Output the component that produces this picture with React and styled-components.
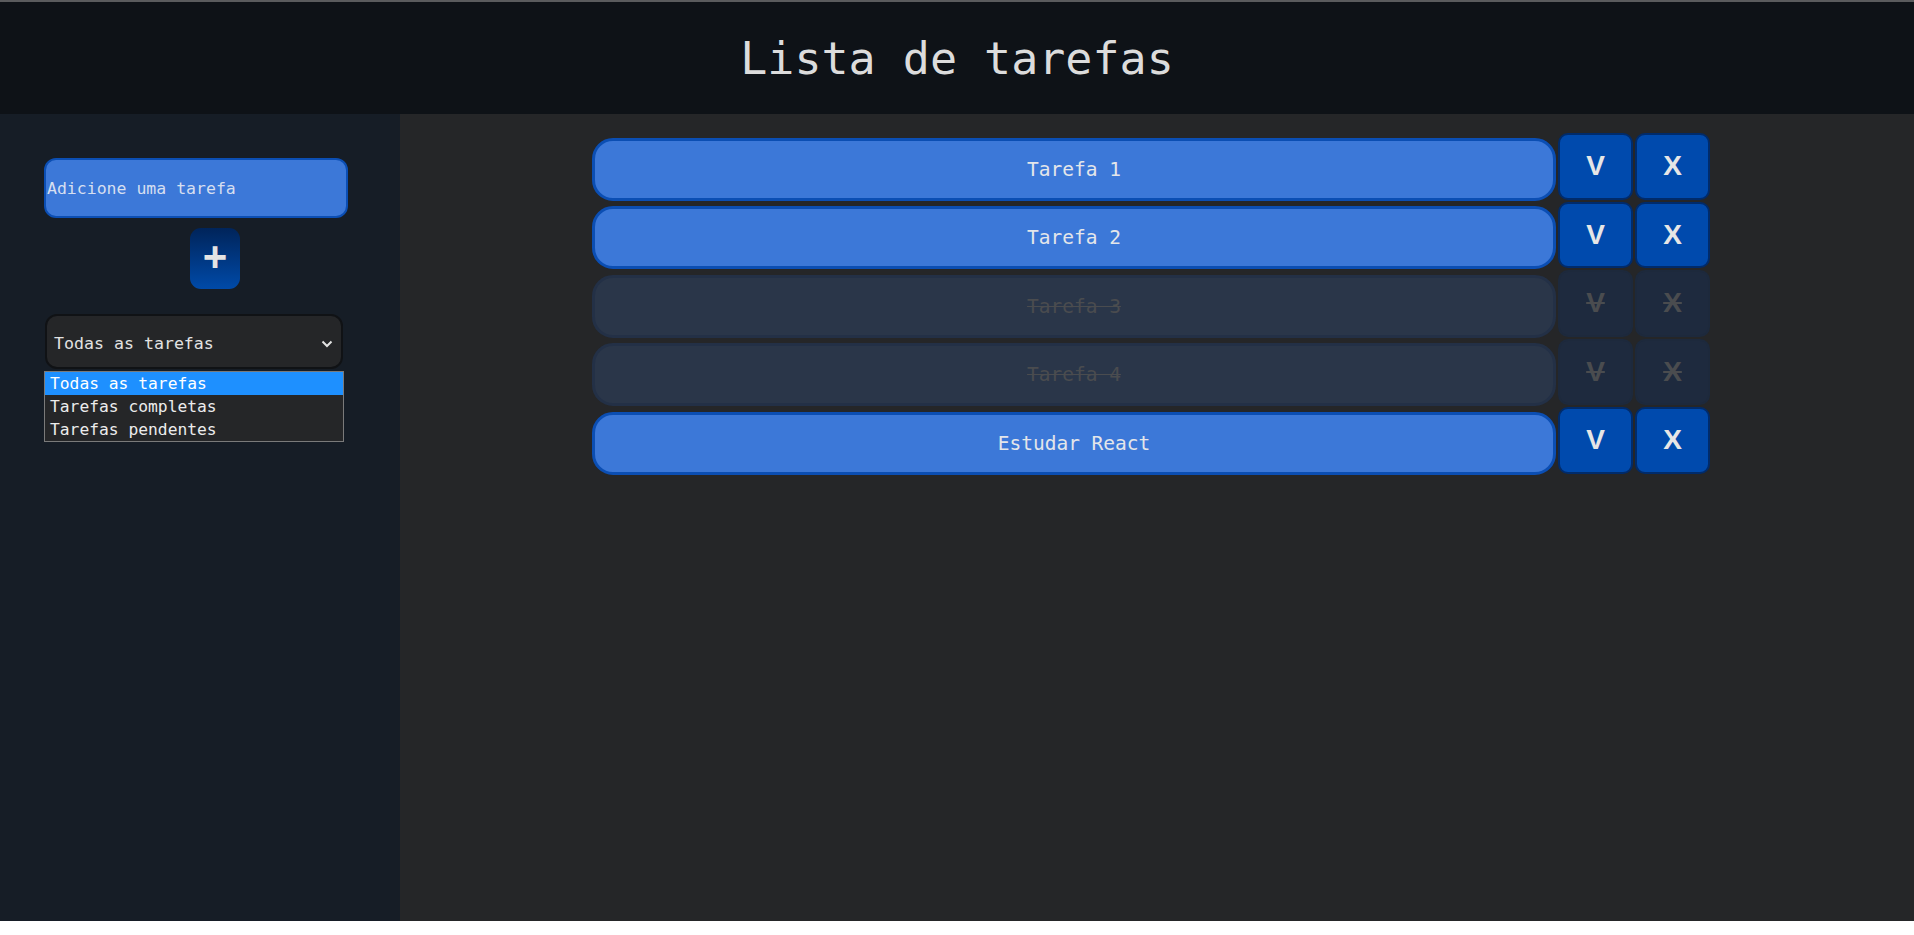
import React from 'react';
import styled, {createGlobalStyle} from 'styled-components';

const mono = '"DejaVu Sans Mono", "Liberation Mono", monospace';

const GlobalStyle = createGlobalStyle`
  body {
    margin: 0;
    background: #ffffff;
    font-family: ${mono};
  }
`;

const Page = styled.div`
  border-top: 2px solid #5a5b5d;
`;

const Header = styled.header`
  height: 112px;
  display: flex;
  align-items: center;
  justify-content: center;
  background: #0e1217;
`;

const Title = styled.h1`
  margin: 0;
  font-family: ${mono};
  font-weight: normal;
  font-size: 45px;
  color: #dcdcdc;
`;

const Layout = styled.div`
  display: grid;
  grid-template-columns: 400px 1fr;
  height: 807px;
`;

const Sidebar = styled.aside`
  background: #161d26;
  padding: 44px 0 0 44px;
  display: flex;
  flex-direction: column;
  align-items: flex-start;
`;

const TaskInput = styled.div`
  box-sizing: border-box;
  width: 304px;
  height: 60px;
  display: flex;
  align-items: center;
  padding-left: 1px;
  background: #3c78d8;
  border: 2px solid #0b4eb3;
  border-radius: 12px;
  color: #d6dff0;
  font-size: 16.5px;
`;

const PlusButton = styled.button`
  box-sizing: border-box;
  width: 50px;
  height: 61px;
  margin: 10px 0 0 146px;
  border: none;
  border-radius: 11px;
  background: linear-gradient(to bottom, #00245a, #004aa8);
  color: #e4e4e4;
  font-family: "Liberation Sans", Arial, sans-serif;
  font-weight: bold;
  font-size: 42px;
  line-height: 1;
  padding: 0 0 4px;
`;

const SelectWrap = styled.div`
  position: relative;
  margin: 25px 0 0 1px;
`;

const SelectBox = styled.div`
  box-sizing: border-box;
  width: 298px;
  height: 55px;
  display: flex;
  align-items: center;
  justify-content: space-between;
  padding: 4px 8px 0 7px;
  background: #252628;
  border: 2px solid #101215;
  border-radius: 12px;
  color: #e2e2e2;
  font-size: 16.6px;
`;

const Options = styled.ul`
  position: absolute;
  top: calc(100% + 2px);
  left: -1px;
  box-sizing: border-box;
  width: 300px;
  margin: 0;
  padding: 0;
  list-style: none;
  background: #252628;
  border: 1px solid #7a7a7a;
`;

const Option = styled.li`
  height: 23px;
  line-height: 23px;
  padding-left: 5px;
  font-size: 16.3px;
  background: ${({active}) => (active ? '#1e90ff' : 'transparent')};
  color: ${({active}) => (active ? '#ffffff' : '#ececec')};
`;

const Main = styled.main`
  background: #252628;
  padding: 19px 0 0 192px;
  display: flex;
  flex-direction: column;
  gap: 2px;
`;

const Row = styled.div`
  display: flex;
  align-items: flex-end;
  gap: 2px;
  height: 66.5px;
`;

const TaskPill = styled.div`
  box-sizing: border-box;
  width: 964px;
  height: 63px;
  display: flex;
  align-items: center;
  justify-content: center;
  border-radius: 21px;
  border: 3px solid ${({done}) => (done ? '#233046' : '#0b4eb3')};
  background: ${({done}) => (done ? '#2a3649' : '#3c78d8')};
  color: ${({done}) => (done ? '#4a4c4f' : '#e4e6ea')};
  text-decoration: ${({done}) => (done ? 'line-through' : 'none')};
  font-size: 19.5px;
  margin-bottom: -1px;
`;

const ActionButton = styled.button`
  box-sizing: border-box;
  width: 75px;
  height: 66.5px;
  margin: 0;
  padding: 0;
  border-radius: 10px;
  border: 2px solid ${({done}) => (done ? '#1d293c' : '#002b6b')};
  background: ${({done}) => (done ? '#1e2a3e' : '#004aad')};
  color: ${({done}) => (done ? '#4a4c4f' : '#e6e6e6')};
  text-decoration: ${({done}) => (done ? 'line-through' : 'none')};
  font-family: "Liberation Sans", Arial, sans-serif;
  font-weight: bold;
  font-size: 28px;
`;

const Chevron = () => (
  <svg width="12" height="8" viewBox="0 0 12 8" fill="none">
    <path d="M1.5 1.5 L6 6 L10.5 1.5" stroke="#e2e2e2" strokeWidth="2" />
  </svg>
);

const tasks = [
  {id: 1, name: 'Tarefa 1', done: false},
  {id: 2, name: 'Tarefa 2', done: false},
  {id: 3, name: 'Tarefa 3', done: true},
  {id: 4, name: 'Tarefa 4', done: true},
  {id: 5, name: 'Estudar React', done: false},
];

const filters = ['Todas as tarefas', 'Tarefas completas', 'Tarefas pendentes'];

export default function App() {
  return (
    <Page>
      <GlobalStyle />
      <Header>
        <Title>Lista de tarefas</Title>
      </Header>
      <Layout>
        <Sidebar>
          <TaskInput>Adicione uma tarefa</TaskInput>
          <PlusButton>+</PlusButton>
          <SelectWrap>
            <SelectBox>
              <span>Todas as tarefas</span>
              <Chevron />
            </SelectBox>
            <Options>
              {filters.map((f, i) => (
                <Option key={f} active={i === 0}>
                  {f}
                </Option>
              ))}
            </Options>
          </SelectWrap>
        </Sidebar>
        <Main>
          {tasks.map(t => (
            <Row key={t.id}>
              <TaskPill done={t.done}>{t.name}</TaskPill>
              <ActionButton done={t.done}>V</ActionButton>
              <ActionButton done={t.done}>X</ActionButton>
            </Row>
          ))}
        </Main>
      </Layout>
    </Page>
  );
}
